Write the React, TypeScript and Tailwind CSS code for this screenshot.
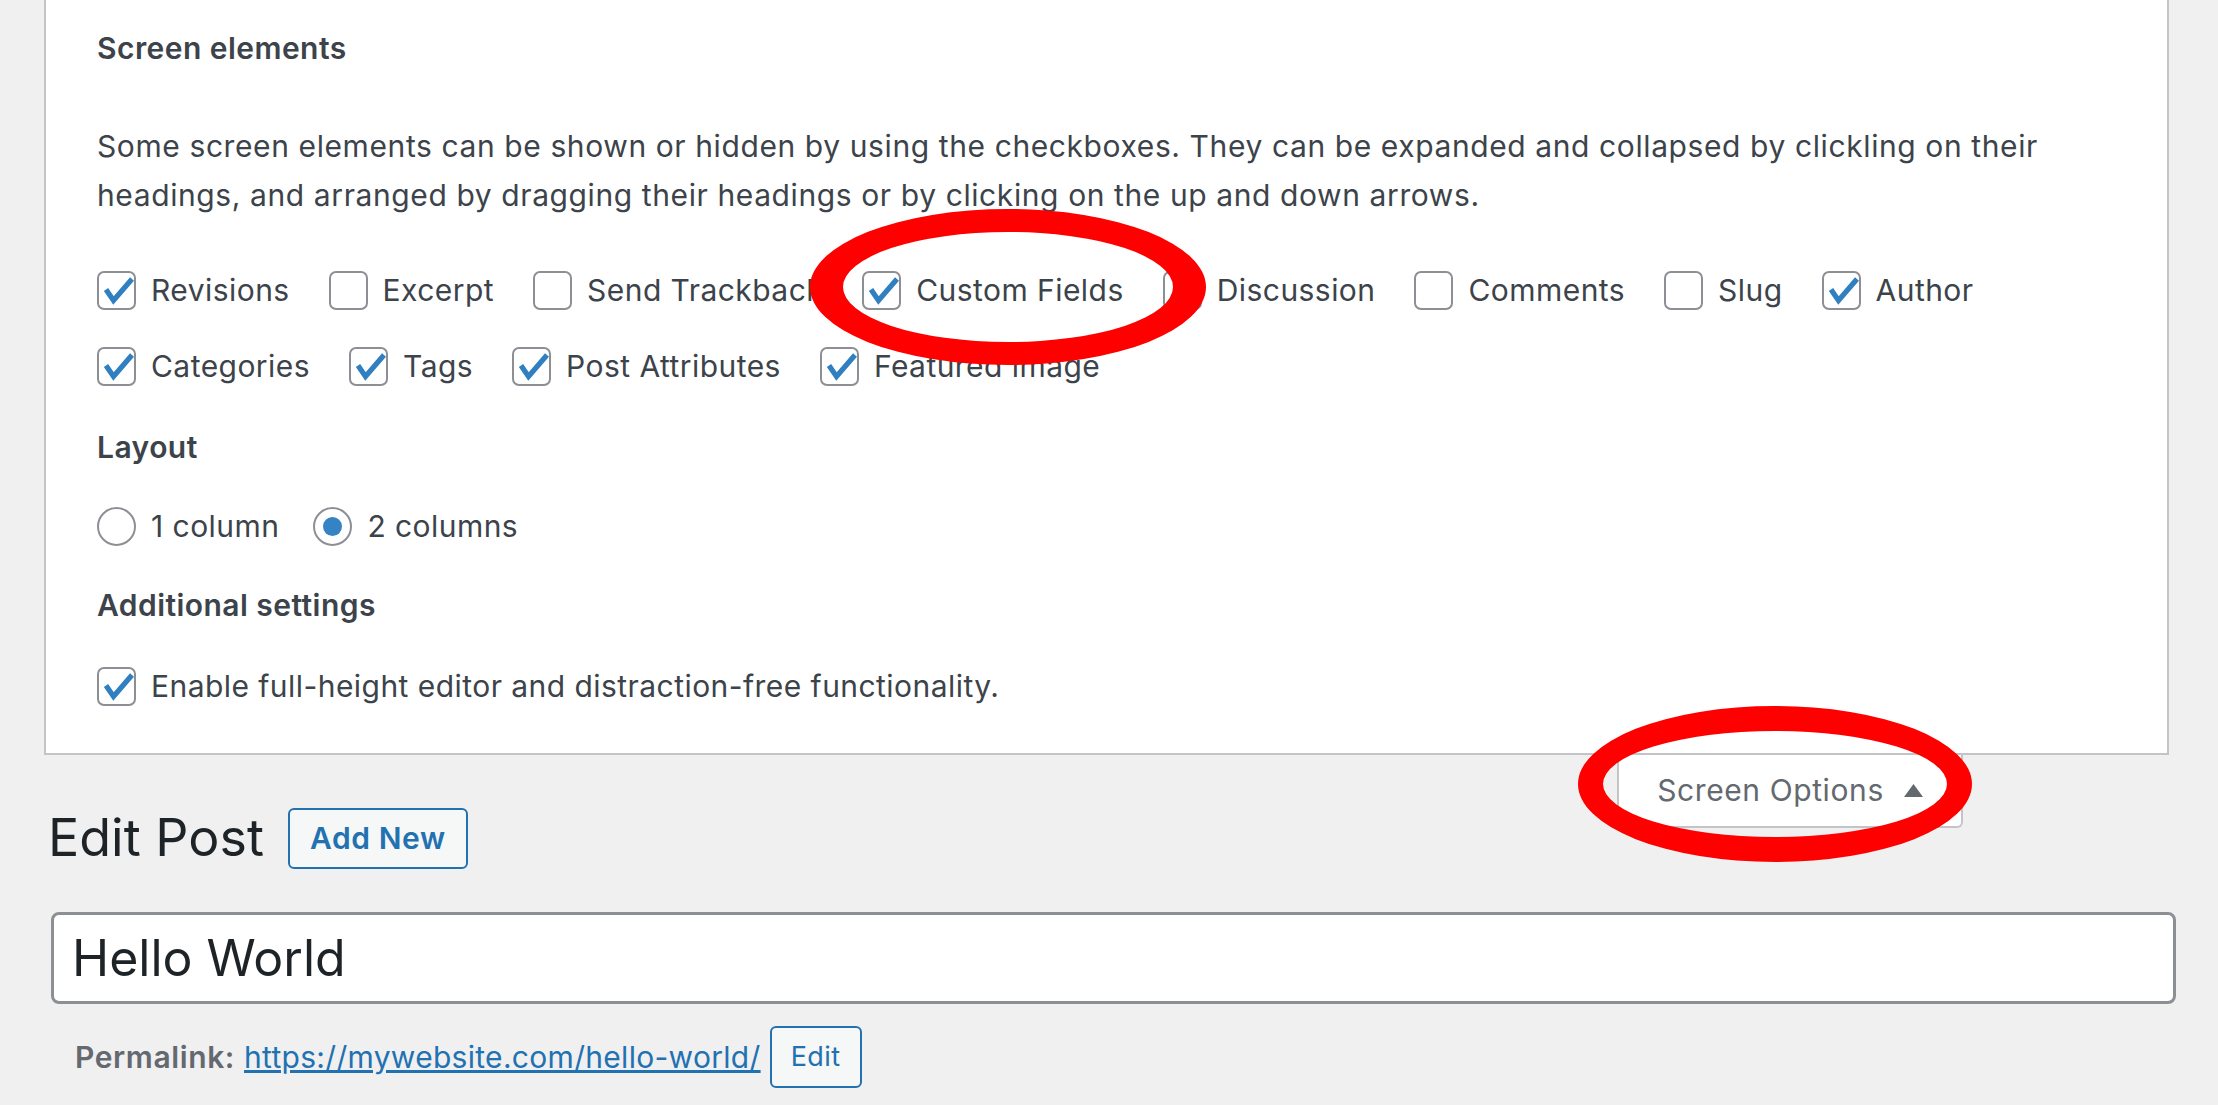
import React from 'react'

const Check = () => (
  <svg viewBox="0 0 39 39" className="absolute left-[-2px] top-[-2px] w-[39px] h-[39px]">
    <path d="M9 18.5L16.5 29.5L35 8" fill="none" stroke="#2f7fc1" strokeWidth="5.2" strokeLinejoin="miter" />
  </svg>
)

const Box = ({ label, checked }: { label: string; checked?: boolean }) => (
  <label className="flex items-center h-[44px] mr-[39px]">
    <span className="relative w-[39px] h-[39px] shrink-0 mr-[15px] rounded-[7px] border-2 border-[#8c8f94] bg-white">
      {checked && <Check />}
    </span>
    <span>{label}</span>
  </label>
)

const Radio = ({ label, checked }: { label: string; checked?: boolean }) => (
  <label className="flex items-center h-[44px] mr-[34px]">
    <span className="w-[39px] h-[39px] shrink-0 mr-[15px] rounded-full border-2 border-[#8c8f94] bg-white flex items-center justify-center">
      {checked && <span className="w-[19px] h-[19px] rounded-full bg-[#3582c4]" />}
    </span>
    <span>{label}</span>
  </label>
)

const boxes = [
  ['Revisions', true],
  ['Excerpt', false],
  ['Send Trackback', false],
  ['Custom Fields', true],
  ['Discussion', false],
  ['Comments', false],
  ['Slug', false],
  ['Author', true],
  ['Categories', true],
  ['Tags', true],
  ['Post Attributes', true],
  ['Featured image', true],
] as const

export default function App() {
  return (
    <div className="relative w-[2218px] h-[1105px] overflow-hidden bg-[#f0f0f1] text-[#3c434a] font-['Inter','Noto_Sans',sans-serif] text-[30px] tracking-[0.015em]">
      {/* screen options panel */}
      <div className="ml-[44px] mr-[49px] bg-white border-x-2 border-b-2 border-[#c3c4c7] pl-[51px] pr-[40px] pt-[28px] pb-[45px]">
        <h5 className="font-semibold leading-[40px]">Screen elements</h5>
        <p className="mt-[54px] leading-[49px] tracking-[0.02em]">
          Some screen elements can be shown or hidden by using the checkboxes. They can be expanded and collapsed by clickling on their
          <br />
          headings, and arranged by dragging their headings or by clicking on the up and down arrows.
        </p>
        <div className="mt-[48px] flex flex-wrap gap-y-[32px]">
          {boxes.map(([l, c]) => (
            <Box key={l} label={l} checked={c} />
          ))}
        </div>
        <h5 className="mt-[39px] font-semibold leading-[40px]">Layout</h5>
        <div className="mt-[37px] flex">
          <Radio label="1 column" />
          <Radio label="2 columns" checked />
        </div>
        <h5 className="mt-[37px] font-semibold leading-[40px]">Additional settings</h5>
        <div className="mt-[39px] flex">
          <Box label="Enable full-height editor and distraction-free functionality." checked />
        </div>
      </div>

      {/* heading + screen options tab */}
      <div className="flex items-start justify-between pl-[48px] pr-[255px]">
        <div className="flex items-center gap-[24px] pt-[52px]">
          <h1 className="text-[52px] leading-[62px] tracking-normal text-[#1d2327]">Edit Post</h1>
          <a className="h-[61px] px-[20px] flex items-center rounded-[6px] border-2 border-[#2271b1] bg-[#f6f7f7] text-[#2271b1] font-semibold tracking-[0.02em]">
            Add New
          </a>
        </div>
        <button className="w-[346px] h-[73px] flex items-center justify-center gap-[20px] bg-white border-x-2 border-b-2 border-[#c3c4c7] rounded-b-[6px] text-[#646970] tracking-[0.02em]">
          <span>Screen Options</span>
          <svg viewBox="0 0 19 13" className="w-[19px] h-[13px]">
            <path d="M9.5 0L19 13H0z" fill="#646970" />
          </svg>
        </button>
      </div>

      {/* title */}
      <div className="mt-[43px] ml-[51px] mr-[42px] h-[92px] flex items-center bg-white border-[3px] border-[#8c8f94] rounded-[8px] pl-[18px] text-[50px] tracking-normal text-[#1d2327]">
        Hello World
      </div>

      <div className="mt-[22px] ml-[75px] flex items-center">
        <strong className="font-semibold text-[#646970] tracking-[0.02em]">Permalink:</strong>
        <a className="ml-[9px] text-[#2271b1] underline tracking-[0.01em]">https://mywebsite.com/hello-world/</a>
        <button className="ml-[9px] w-[92px] h-[62px] rounded-[6px] border-2 border-[#2271b1] bg-[#f6f7f7] text-[#2271b1] text-[27px]">
          Edit
        </button>
      </div>

      {/* annotation rings */}
      <svg className="absolute left-0 top-0 w-[2218px] h-[1105px] pointer-events-none" viewBox="0 0 2218 1105">
        <path
          fillRule="evenodd"
          fill="#ff0000"
          d="M810 287a198 78 0 1 0 396 0a198 78 0 1 0 -396 0zM843 287a165 55 0 1 0 330 0a165 55 0 1 0 -330 0z"
        />
        <path
          fillRule="evenodd"
          fill="#ff0000"
          d="M1578 784a197 78 0 1 0 394 0a197 78 0 1 0 -394 0zM1603 784a172 53 0 1 0 344 0a172 53 0 1 0 -344 0z"
        />
      </svg>
    </div>
  )
}
